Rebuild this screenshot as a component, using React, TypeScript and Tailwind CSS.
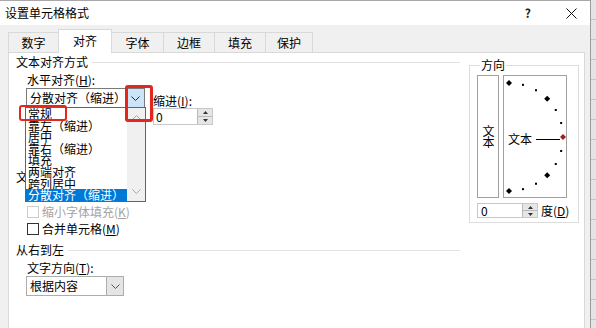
import React from "react";

const items = [
  "常规",
  "靠左（缩进）",
  "居中",
  "靠右（缩进）",
  "填充",
  "两端对齐",
  "跨列居中",
  "分散对齐（缩进）",
];

function Chevron({ up = false, color = "#333" }: { up?: boolean; color?: string }) {
  return (
    <svg width="9" height="5" viewBox="0 0 9 5">
      <path
        d={up ? "M0.5 4.5 L4.5 0.5 L8.5 4.5" : "M0.5 0.5 L4.5 4.5 L8.5 0.5"}
        fill="none"
        stroke={color}
        strokeWidth="1"
      />
    </svg>
  );
}

function SpinButtons() {
  return (
    <div className="w-[15px] h-full flex flex-col border-l border-[#b9b9b9] bg-[#e6e6e6]">
      <div className="flex-1 flex items-center justify-center border-b border-[#b9b9b9]">
        <svg width="5" height="3" viewBox="0 0 5 3">
          <path d="M0 3 L2.5 0 L5 3Z" fill="#333" />
        </svg>
      </div>
      <div className="flex-1 flex items-center justify-center">
        <svg width="5" height="3" viewBox="0 0 5 3">
          <path d="M0 0 L2.5 3 L5 0Z" fill="#333" />
        </svg>
      </div>
    </div>
  );
}

function GroupHead({ label, line = true }: { label: string; line?: boolean }) {
  return (
    <div className="flex items-center h-[14px]">
      <span className="leading-[14px] whitespace-nowrap">{label}</span>
      {line && <div className="flex-1 h-px bg-[#e3e3e3] ml-[4px]" />}
    </div>
  );
}

function Check({ label, disabled = false }: { label: React.ReactNode; disabled?: boolean }) {
  return (
    <div className="flex items-center h-[14px] ml-[11px]">
      <div
        className={
          disabled
            ? "w-[12px] h-[12px] border border-[#cccccc] bg-white"
            : "w-[12px] h-[12px] border border-[#333333] bg-white"
        }
      />
      <span className={disabled ? "ml-[3px] leading-[14px] text-[#a3a3a3]" : "ml-[3px] leading-[14px]"}>
        {label}
      </span>
    </div>
  );
}

function Dial() {
  const cx = 5;
  const cy = 61;
  const r = 54;
  const marks = [];
  for (let a = 90; a >= -90; a -= 15) {
    const rad = (a * Math.PI) / 180;
    const x = cx + r * Math.cos(rad);
    const y = cy - r * Math.sin(rad);
    if (a % 45 === 0) {
      marks.push(
        <polygon
          key={a}
          points={`${x},${y - 3} ${x + 3},${y} ${x},${y + 3} ${x - 3},${y}`}
          fill={a === 0 ? "#9a1f1f" : "#000"}
        />
      );
    } else {
      marks.push(<rect key={a} x={x - 1} y={y - 1} width="2" height="2" fill="#000" />);
    }
  }
  return (
    <div className="relative w-[64px] h-[123px] ml-[4px] border border-[#a0a0a0] bg-white">
      <svg width="62" height="121" viewBox="0 0 62 121" className="absolute left-0 top-0">
        <line x1="32" y1="63.5" x2="56" y2="63.5" stroke="#000" strokeWidth="1" />
        {marks}
      </svg>
      <span className="absolute left-[4px] top-[56px] leading-[14px]">文本</span>
    </div>
  );
}

export default function App() {
  return (
    <div className="relative w-[596px] h-[328px] overflow-hidden flex bg-[#f0f0f0] text-[12px] text-black font-['Noto_Sans_CJK_SC','Noto_Sans',sans-serif]">
      <div className="w-[591px] h-full flex flex-col overflow-hidden border-r border-[#9b9b9b] bg-[#f0f0f0]">
        {/* title bar */}
        <div className="h-[25px] shrink-0 flex items-center bg-white border-t border-[#a8a8a8] pl-[5px] pr-[13px]">
          <span className="leading-[14px]">设置单元格格式</span>
          <span className="ml-auto font-bold text-[12px] leading-[14px] text-[#222]">?</span>
          <svg width="11" height="11" viewBox="0 0 11 11" className="ml-[35px]">
            <path d="M0.5 0.5 L10.5 10.5 M10.5 0.5 L0.5 10.5" stroke="#111" strokeWidth="1" />
          </svg>
        </div>

        {/* tabs */}
        <div className="h-[27px] shrink-0 flex items-end pl-[8px] relative z-10">
          <div className="w-[50px] h-[20px] flex items-center justify-center border-l border-t border-[#d9d9d9]">数字</div>
          <div className="w-[54px] h-[24px] -mb-px pb-[1px] flex items-center justify-center bg-white border-x border-t border-[#d9d9d9]">对齐</div>
          <div className="w-[51px] h-[20px] flex items-center justify-center border-t border-[#d9d9d9]">字体</div>
          <div className="w-[51px] h-[20px] flex items-center justify-center border-l border-t border-[#d9d9d9]">边框</div>
          <div className="w-[51px] h-[20px] flex items-center justify-center border-l border-t border-[#d9d9d9]">填充</div>
          <div className="w-[48px] h-[20px] flex items-center justify-center border-x border-t border-[#d9d9d9]">保护</div>
        </div>

        {/* panel */}
        <div className="shrink-0 h-[290px] ml-[8px] mr-[5px] bg-white border border-[#d9d9d9] flex items-start pl-[7px] pt-[2px]">
          <div className="w-[444px] flex flex-col">
            <GroupHead label="文本对齐方式" />
            <div className="mt-[4px] ml-[11px] h-[14px] leading-[14px]">
              水平对齐(<u>H</u>):
            </div>
            <div className="mt-[1px] ml-[10px] flex h-[37px]">
              <div className="w-[119px] h-[20px] border border-[#7a7a7a] flex">
                <div className="flex-1 pl-[3px] leading-[18px] whitespace-nowrap">分散对齐（缩进）</div>
                <div className="w-[18px] bg-[#cce4f7] border-l border-[#569de5] flex items-center justify-center">
                  <Chevron color="#2b2b2b" />
                </div>
              </div>
              <div className="ml-[8px] flex flex-col">
                <div className="mt-[6px] h-[14px] leading-[14px]">
                  缩进(<u>I</u>):
                </div>
                <div className="w-[60px] h-[17px] border border-[#c8c8c8] flex">
                  <div className="flex-1 pl-[2px] leading-[15px]">0</div>
                  <SpinButtons />
                </div>
              </div>
            </div>
            {/* area hidden under the open list */}
            <div className="h-[38px]" />
            <div className="mt-[7px]">
              <GroupHead label="文本控制" line={false} />
            </div>
            <div className="mt-[3px] h-[14px]" />
            <div className="mt-[4px]">
              <Check disabled label={<>缩小字体填充(<u>K</u>)</>} />
            </div>
            <div className="mt-[3px]">
              <Check label={<>合并单元格(<u>M</u>)</>} />
            </div>
            <div className="mt-[7px]">
              <GroupHead label="从右到左" />
            </div>
            <div className="mt-[4px] ml-[11px] h-[14px] leading-[14px]">
              文字方向(<u>T</u>):
            </div>
            <div className="mt-[1px] ml-[10px] w-[98px] h-[20px] border border-[#adadad] flex">
              <div className="flex-1 pl-[3px] leading-[18px]">根据内容</div>
              <div className="w-[17px] bg-[#e5e5e5] border-l border-[#adadad] flex items-center justify-center">
                <Chevron color="#555" />
              </div>
            </div>
          </div>

          <fieldset className="ml-[9px] mt-[3px] w-[110px] border border-[#dcdcdc] pl-[7px] pt-[3px] pb-[4px]">
            <legend className="ml-[3px] px-[1px] leading-[14px]">方向</legend>
            <div className="flex">
              <div className="w-[22px] h-[123px] border border-[#a0a0a0] flex items-center justify-center pb-[1px]">
                <span className="[writing-mode:vertical-rl] leading-[12px] tracking-[-1px]">文本</span>
              </div>
              <Dial />
            </div>
            <div className="mt-[5px] flex items-center">
              <div className="w-[61px] h-[15px] border border-[#c8c8c8] flex">
                <div className="flex-1 pl-[3px] leading-[13px]">0</div>
                <SpinButtons />
              </div>
              <span className="ml-[3px] leading-[14px]">
                度(<u>D</u>)
              </span>
            </div>
          </fieldset>
        </div>
      </div>
      <div className="flex-1 bg-[repeating-linear-gradient(to_bottom,#e4e4e4_0px,#e4e4e4_19px,#c4c4c4_19px,#c4c4c4_20px)]" />

      {/* open dropdown list */}
      <div className="absolute left-[25px] top-[107px] w-[121px] h-[95px] bg-white border border-[#646464] flex">
        <div className="w-[101px] flex flex-col">
          {items.map((t, i) => (
            <div
              key={t}
              className={
                i === items.length - 1
                  ? "h-[11.6px] leading-[11.6px] pl-[2px] whitespace-nowrap bg-[#0078d7] text-white"
                  : "h-[11.6px] leading-[11.6px] pl-[2px] whitespace-nowrap"
              }
            >
              {t}
            </div>
          ))}
        </div>
        <div className="flex-1 bg-[#f0f0f0] flex flex-col items-center justify-between py-[7px]">
          <Chevron up color="#a6a6a6" />
          <Chevron color="#a6a6a6" />
        </div>
      </div>

      {/* red highlight boxes */}
      <div className="absolute left-[19px] top-[105px] w-[48px] h-[16px] border-2 border-[#e3261e] rounded-[3px]" />
      <div className="absolute left-[125px] top-[85px] w-[28px] h-[37px] border-[3px] border-[#e3261e] rounded-[3px]" />
    </div>
  );
}
